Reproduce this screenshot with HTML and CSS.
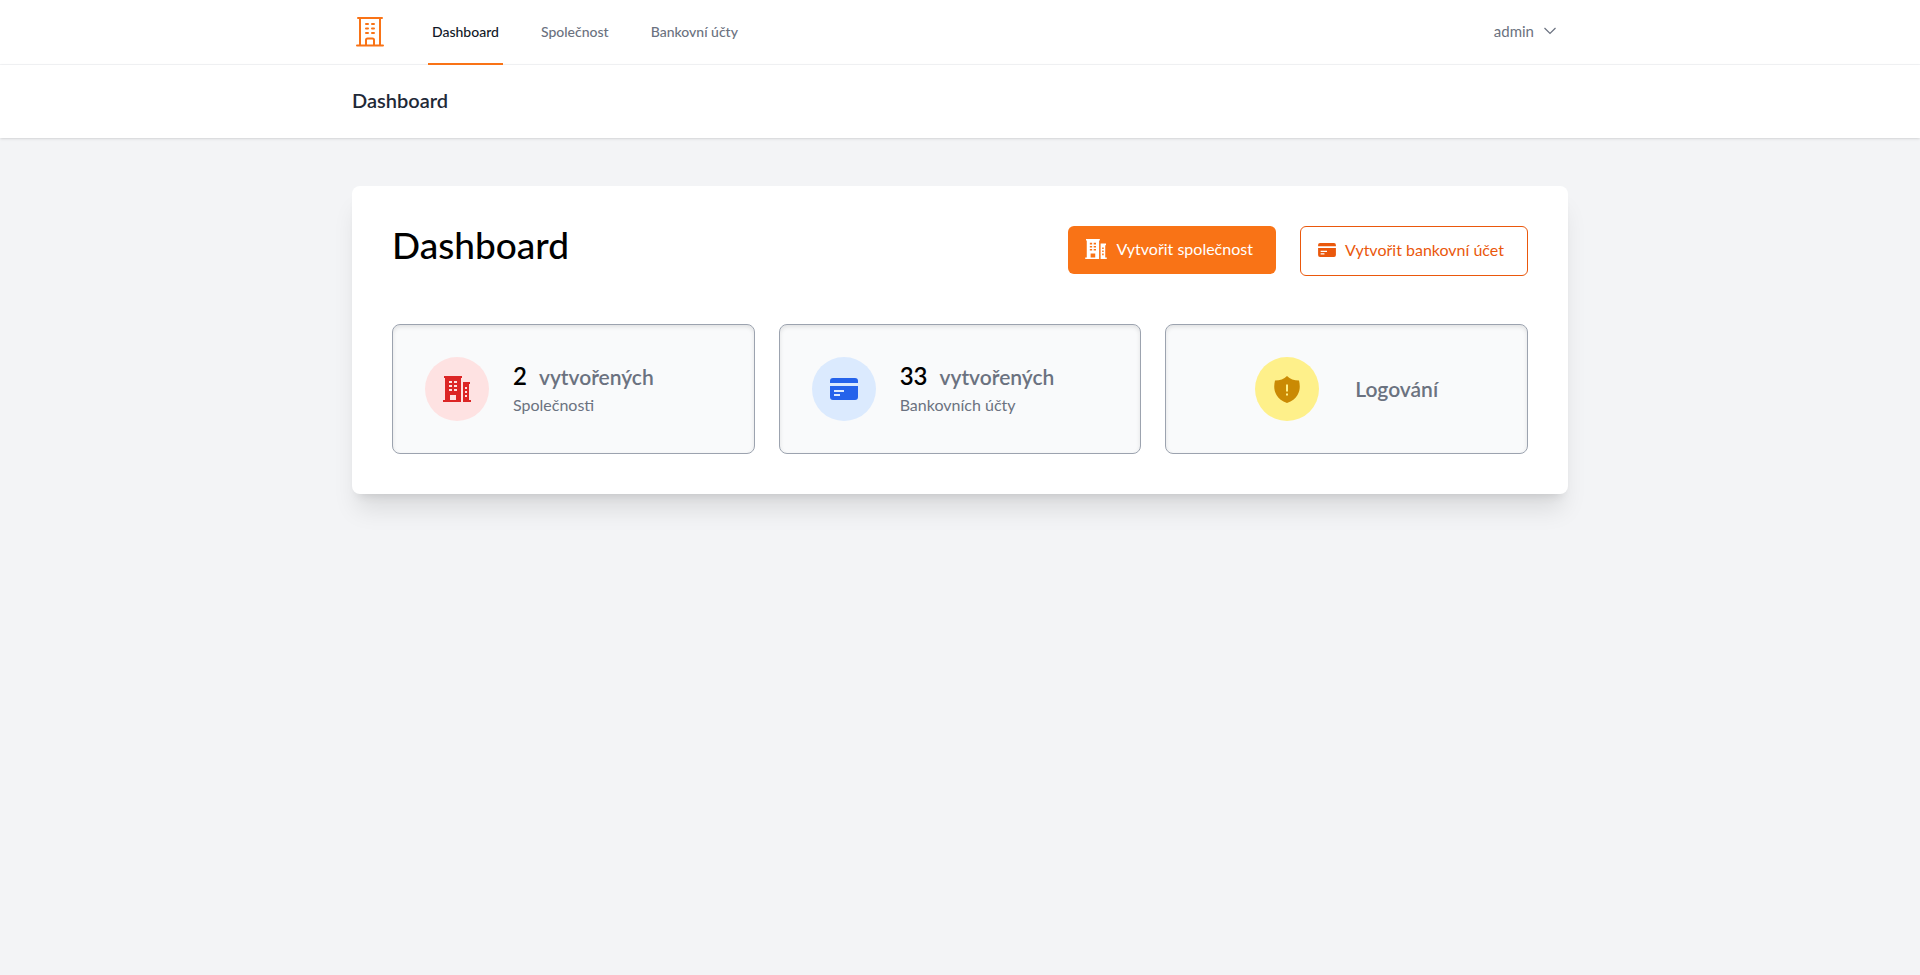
FILE: index.html
```html
<!DOCTYPE html>
<html lang="cs">
<head>
<meta charset="utf-8">
<meta name="viewport" content="width=device-width, initial-scale=1">
<title>Dashboard</title>
<link rel="stylesheet" href="styles.css">
</head>
<body>
<svg class="sprite" aria-hidden="true">
  <symbol id="buildings" viewBox="0 0 28 26">
    <path fill-rule="evenodd" d="M1 0h18v2h-1v24H0v-2h2V2H1zM6 5v2h3V5zM11 5v2h3V5zM6 9v2h3V9zM11 9v2h3V9zM6 13v2h3v-2zM11 13v2h3v-2zM7 19v5h6v-5zM20 6h7v2h-1v16h2v2h-8zM22 11v2h2v-2zM22 15v2h2v-2zM22 19v2h2v-2z"/>
  </symbol>
  <symbol id="bank-card" viewBox="0 0 28 22">
    <path d="M3 0h22a3 3 0 0 1 3 3v2H0V3a3 3 0 0 1 3-3z"/>
    <path fill-rule="evenodd" d="M0 8h28v11a3 3 0 0 1-3 3H3a3 3 0 0 1-3-3zM4 12v2h10v-2zM4 16v2h6v-2z"/>
  </symbol>
</svg>
<nav class="navbar" aria-label="Hlavní navigace">
  <div class="container navbar-inner">
    <a class="logo" href="#" aria-label="Domů">
      <svg viewBox="0 0 32 32" fill="none" stroke="currentColor" stroke-width="2" stroke-linecap="round" stroke-linejoin="round">
        <path d="M4 2h24M3 29.500h26M6 2v27M26 2v27M12 29v-5a1.500 1.500 0 0 1 1.500-1.500h5a1.500 1.500 0 0 1 1.500 1.500v5M12 8h2M18 8h2M12 12.500h2M18 12.500h2M12 17h2M18 17h2"/>
      </svg>
    </a>
    <div class="nav-links">
      <a class="nav-link active" href="#" aria-current="page">Dashboard</a>
      <a class="nav-link" href="#">Společnost</a>
      <a class="nav-link" href="#">Bankovní účty</a>
    </div>
    <button class="user-menu" type="button">admin
      <svg viewBox="0 0 16 16" fill="none" stroke="currentColor" stroke-width="1.200"><path d="m2.500 5 5.500 5.500L13.500 5"/></svg>
    </button>
  </div>
</nav>
<header class="page-header">
  <div class="container"><h2 class="page-title">Dashboard</h2></div>
</header>
<main class="container content">
  <section class="panel">
    <div class="panel-top">
      <h1 class="panel-title">Dashboard</h1>
      <div class="actions">
        <button class="button primary" type="button"><svg class="building-icon"><use href="#buildings"/></svg>Vytvořit společnost</button>
        <button class="button outline" type="button"><svg class="card-icon"><use href="#bank-card"/></svg>Vytvořit bankovní účet</button>
      </div>
    </div>
    <div class="stats">
      <a class="stat" href="#">
        <span class="badge red"><svg class="building-icon"><use href="#buildings"/></svg></span>
        <span class="stat-text">
          <span class="stat-line"><span class="count">2</span><span class="stat-label">vytvořených</span></span>
          <span class="stat-name">Společnosti</span>
        </span>
      </a>
      <a class="stat" href="#">
        <span class="badge blue"><svg class="card-icon"><use href="#bank-card"/></svg></span>
        <span class="stat-text">
          <span class="stat-line"><span class="count">33</span><span class="stat-label">vytvořených</span></span>
          <span class="stat-name">Bankovních účty</span>
        </span>
      </a>
      <a class="stat centered" href="#">
        <span class="badge yellow"><svg class="shield-icon" viewBox="0 0 26 27"><path fill-rule="evenodd" d="M13 0C16 3 20 4.500 25 4.500 26 9 26.500 14 23.500 19c-2 3.500-5.500 6.500-10.500 8C8 25.500 4.500 22.500 2.500 19-.5 14 0 9 1 4.500 6 4.500 10 3 13 0zM12 8.500v7h2v-7zM12 17.500v2h2v-2z"/></svg></span>
        <span class="stat-label">Logování</span>
      </a>
    </div>
  </section>
</main>
</body>
</html>
```
FILE: styles.css
```css
*, *::before, *::after { box-sizing: border-box; }
body {
  margin: 0;
  min-height: 100vh;
  background: #f3f4f6;
  color: #000;
  font-family: Lato, "Noto Sans", sans-serif;
  font-size: 16px;
  line-height: 24px;
}
h1, h2 { margin: 0; }
a { color: inherit; text-decoration: none; }
button { font: inherit; cursor: pointer; }
svg { display: block; flex: none; fill: currentColor; }
.sprite { position: absolute; width: 0; height: 0; }
.container { max-width: 1216px; margin: 0 auto; }

.navbar { background: #fff; border-bottom: 1px solid #f3f4f6; }
.navbar-inner { display: flex; align-items: center; height: 64px; }
.logo { padding-left: 2px; color: #f97316; }
.logo svg { width: 32px; height: 32px; fill: none; }
.nav-links { display: flex; align-self: stretch; gap: 34px; margin: 0 0 -1px 42px; }
.nav-link {
  display: flex;
  align-items: center;
  padding: 0 4px;
  border-bottom: 2px solid transparent;
  color: #6b7280;
  font-size: 14px;
  font-weight: 500;
}
.nav-link.active { color: #111827; border-color: #f97316; }
.user-menu {
  display: flex;
  align-items: center;
  gap: 8px;
  margin-left: auto;
  padding: 8px 10px 10px;
  border: 0;
  background: transparent;
  color: #6b7280;
  font-size: 15px;
  line-height: 16px;
}
.user-menu svg { width: 16px; height: 16px; fill: none; }

.page-header {
  padding: 23px 0 25px;
  background: #fff;
  box-shadow: 0 1px 3px rgb(0 0 0 / 10%), 0 1px 2px -1px rgb(0 0 0 / 10%);
}
.page-title { color: #1f2937; font-size: 20px; font-weight: 600; line-height: 25px; }

.content { padding: 48px 0; }
.panel {
  padding: 40px;
  border-radius: 8px;
  background: #fff;
  box-shadow: 0 20px 25px -5px rgb(0 0 0 / 10%), 0 8px 10px -6px rgb(0 0 0 / 10%);
}
.panel-top { display: flex; justify-content: space-between; align-items: flex-start; margin-bottom: 48px; }
.panel-title { font-size: 37px; font-weight: 500; line-height: 38px; }
.actions { display: flex; align-items: flex-start; gap: 24px; }
.button {
  display: flex;
  align-items: center;
  gap: 9px;
  padding: 11px 23px 13px 17px;
  border: 0;
  border-radius: 6px;
}
.button .building-icon { width: 22px; height: 20px; }
.button .card-icon { width: 18px; height: 14px; }
.primary { background: #f97316; color: #fff; }
.outline { border: 1px solid #ea580c; background: #fff; color: #ea580c; }

.stats { display: grid; grid-template-columns: repeat(3, 1fr); gap: 24px; }
.stat {
  display: flex;
  align-items: center;
  gap: 24px;
  padding: 32px;
  border: 1px solid #9ca3af;
  border-radius: 8px;
  background: #f9fafb;
  box-shadow: inset 0 2px 4px rgb(0 0 0 / 10%);
  color: #6b7280;
}
.centered { justify-content: center; gap: 36px; }
.badge { display: grid; place-items: center; width: 64px; height: 64px; border-radius: 50%; }
.badge .building-icon { width: 28px; height: 26px; }
.badge .card-icon { width: 28px; height: 22px; }
.badge .shield-icon { width: 26px; height: 27px; }
.red { background: #fee2e2; color: #dc2626; }
.blue { background: #dbeafe; color: #2563eb; }
.yellow { background: #fef08a; color: #ca8a04; }
.stat-text { display: flex; flex-direction: column; padding-bottom: 2px; }
.stat-line { display: flex; align-items: baseline; gap: 12px; line-height: 32px; }
.count { color: #000; font-size: 24px; font-weight: 600; }
.stat-label { font-size: 21px; font-weight: 600; }
```
